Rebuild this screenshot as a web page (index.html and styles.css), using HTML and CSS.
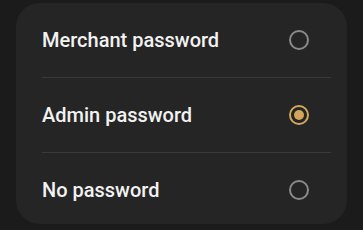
FILE: index.html
```html
<!DOCTYPE html>
<html lang="en">
<head>
    <meta charset="UTF-8">
    <meta name="viewport" content="width=device-width, initial-scale=1.0">
    <title>Password type</title>
    <link rel="stylesheet" href="styles.css">
</head>
<body>
<div class="card">
    <div class="option">
        <span class="label">Merchant password</span>
        <span class="radio"></span>
    </div>
    <div class="option">
        <span class="label">Admin password</span>
        <span class="radio checked"></span>
    </div>
    <div class="option">
        <span class="label">No password</span>
        <span class="radio"></span>
    </div>
</div>
</body>
</html>
```

FILE: styles.css
```css
body {
    margin: 0;
    padding: 3px 16px 0 16px;
    background-color: #1b1b1b;
    font-family: Roboto, sans-serif;
}

.card {
    background-color: #252525;
    border-radius: 24px;
    padding: 0 16px 0 26px;
    height: 221px;
    box-sizing: border-box;
}

.option {
    display: flex;
    align-items: center;
    justify-content: space-between;
    height: 74px;
    padding-right: 22px;
    border-bottom: 1px solid #3a3a3a;
}

.option:last-child {
    border-bottom: none;
}

.label {
    color: #f2f2f2;
    font-size: 20px;
    font-weight: 500;
}

.radio {
    width: 16px;
    height: 16px;
    border: 2px solid #8a8a8a;
    border-radius: 50%;
    display: grid;
    place-content: center;
}

.radio.checked {
    border-color: #d3a65e;
}

.radio.checked::after {
    content: "";
    width: 10px;
    height: 10px;
    border-radius: 50%;
    background-color: #d3a65e;
}
```
